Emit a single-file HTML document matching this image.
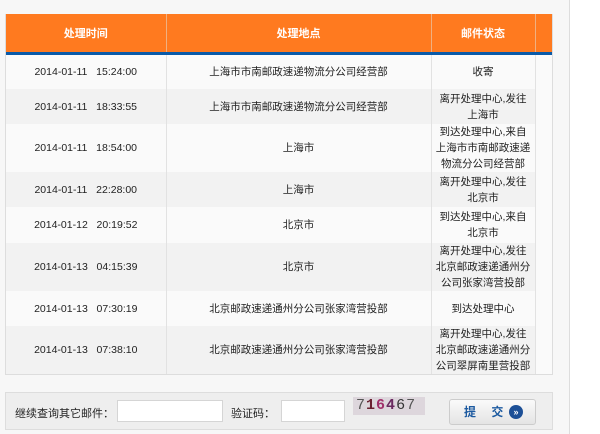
<!DOCTYPE html>
<html><head><meta charset="utf-8"><style>
*{margin:0;padding:0;box-sizing:border-box}
body{width:600px;height:434px;background:#f7f7f7;font-family:"Liberation Sans","Noto Sans CJK SC",sans-serif;font-size:11px;color:#222;position:relative;overflow:hidden}
.rline{position:absolute;left:569px;top:0;width:1px;height:434px;background:#ddd}
.rbg{position:absolute;left:570px;top:0;width:30px;height:434px;background:#fff}
.wrap{position:absolute;left:5px;top:14px;width:548px;height:361px;border:1px solid #ddd;border-top:none;background:#fafafa;overflow:hidden}
table{border-collapse:collapse;width:547px;table-layout:fixed}
th{background:#ff7a1f;color:#fff;height:39px;font-weight:bold;border-right:1px solid #f0b080;border-bottom:3px solid #0a5aa8;font-size:11px}
td{text-align:center;border-right:1px solid #e2e2e2;line-height:16px;padding:0 4px;font-size:10.5px;overflow:hidden}
td.t{white-space:nowrap}
tr.e td.c{background:#f2f2f2}
.form{position:absolute;left:5px;top:392px;width:548px;height:38px;background:#eee;border:1px solid #ddd}
.form span{position:absolute;top:12px}
.in{position:absolute;top:7px;height:22px;background:#fff;border:1px solid #d5d5d5}
.cap{position:absolute;left:347px;top:4px;width:72px;height:18px;background:#ddd6dc;font-family:"Liberation Mono",monospace;font-size:15px;letter-spacing:1px;line-height:18px;padding-left:3px}
.btn{position:absolute;left:443px;top:6px;width:87px;height:26px;border:1px solid #ccc;border-radius:3px;background:linear-gradient(#fafafa,#e4e4e4);color:#1c5aa0;font-weight:bold;font-size:12px;line-height:24px;padding-left:14px;letter-spacing:6px}
.btn i{position:absolute;left:59px;top:5px;width:14px;height:14px;border-radius:50%;background:#1c4f96;color:#fff;font-style:normal;font-size:9px;line-height:14px;text-align:center;letter-spacing:0}
</style></head><body>
<div class="rbg"></div><div class="rline"></div>
<div class="wrap"><table>
<colgroup><col style="width:160px"><col style="width:265px"><col style="width:104px"><col style="width:18px"></colgroup>
<tr><th>处理时间</th><th>处理地点</th><th>邮件状态</th><th></th></tr>
<tr style="height:36px"><td class="c t">2014-01-11&nbsp;&nbsp;&nbsp;15:24:00</td><td class="c">上海市市南邮政速递物流分公司经营部</td><td class="c">收寄</td><td></td></tr>
<tr class="e" style="height:35px"><td class="c t">2014-01-11&nbsp;&nbsp;&nbsp;18:33:55</td><td class="c">上海市市南邮政速递物流分公司经营部</td><td class="c">离开处理中心,发往上海市</td><td></td></tr>
<tr style="height:48px"><td class="c t">2014-01-11&nbsp;&nbsp;&nbsp;18:54:00</td><td class="c">上海市</td><td class="c">到达处理中心,来自上海市市南邮政速递物流分公司经营部</td><td></td></tr>
<tr class="e" style="height:35px"><td class="c t">2014-01-11&nbsp;&nbsp;&nbsp;22:28:00</td><td class="c">上海市</td><td class="c">离开处理中心,发往北京市</td><td></td></tr>
<tr style="height:36px"><td class="c t">2014-01-12&nbsp;&nbsp;&nbsp;20:19:52</td><td class="c">北京市</td><td class="c">到达处理中心,来自北京市</td><td></td></tr>
<tr class="e" style="height:48px"><td class="c t">2014-01-13&nbsp;&nbsp;&nbsp;04:15:39</td><td class="c">北京市</td><td class="c">离开处理中心,发往北京邮政速递通州分公司张家湾营投部</td><td></td></tr>
<tr style="height:35px"><td class="c t">2014-01-13&nbsp;&nbsp;&nbsp;07:30:19</td><td class="c">北京邮政速递通州分公司张家湾营投部</td><td class="c">到达处理中心</td><td></td></tr>
<tr class="e" style="height:48px"><td class="c t">2014-01-13&nbsp;&nbsp;&nbsp;07:38:10</td><td class="c">北京邮政速递通州分公司张家湾营投部</td><td class="c">离开处理中心,发往北京邮政速递通州分公司翠屏南里营投部</td><td></td></tr>
</table></div>
<div class="form">
<span style="left:9px">继续查询其它邮件：</span>
<div class="in" style="left:111px;width:106px"></div>
<span style="left:225px">验证码：</span>
<div class="in" style="left:275px;width:64px"></div>
<div class="cap"><b style="font-weight:normal;color:#555">7</b><b style="color:#6a2030">1</b><b style="color:#a0306a">6</b><b style="color:#6a2a60">4</b><b style="font-weight:normal;color:#333">6</b><b style="font-weight:normal;color:#555">7</b></div>
<div class="btn">提 交<i>»</i></div>
</div>
</body></html>
